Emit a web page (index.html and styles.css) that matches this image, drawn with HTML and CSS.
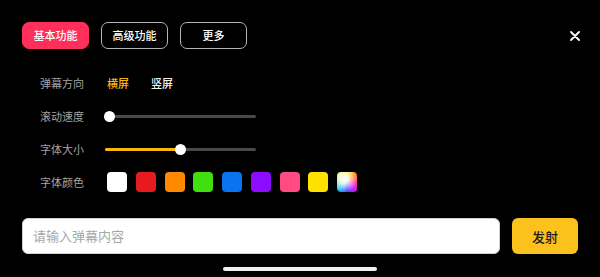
FILE: index.html
```html
<!DOCTYPE html>
<html lang="zh-CN">
<head>
<meta charset="utf-8">
<title>弹幕设置</title>
<link rel="stylesheet" href="styles.css">
</head>
<body>
<div class="page">
  <div class="top">
    <div class="tabs">
      <button class="tab active">基本功能</button>
      <button class="tab">高级功能</button>
      <button class="tab">更多</button>
    </div>
    <button class="close" aria-label="关闭">
      <svg width="10" height="10" viewBox="0 0 10 10"><path d="M1 1L9 9M9 1L1 9" stroke="#fff" stroke-width="1.8" stroke-linecap="round"/></svg>
    </button>
  </div>

  <div class="settings">
    <div class="row">
      <span class="label">弹幕方向</span>
      <div class="options">
        <span class="opt selected">横屏</span>
        <span class="opt">竖屏</span>
      </div>
    </div>
    <div class="row">
      <span class="label">滚动速度</span>
      <div class="slider" style="--v: 0">
        <div class="fill"></div>
        <div class="thumb"></div>
      </div>
    </div>
    <div class="row">
      <span class="label">字体大小</span>
      <div class="slider" style="--v: 0.5">
        <div class="fill"></div>
        <div class="thumb"></div>
      </div>
    </div>
    <div class="row">
      <span class="label">字体颜色</span>
      <div class="swatches">
        <span class="sw c-white"></span>
        <span class="sw c-red"></span>
        <span class="sw c-orange"></span>
        <span class="sw c-green"></span>
        <span class="sw c-blue"></span>
        <span class="sw c-purple"></span>
        <span class="sw c-pink"></span>
        <span class="sw c-yellow"></span>
        <span class="sw c-rainbow"></span>
      </div>
    </div>
  </div>

  <div class="compose">
    <div class="input">请输入弹幕内容</div>
    <button class="send">发射</button>
  </div>

  <div class="home"></div>
</div>
</body>
</html>
```

FILE: styles.css
```css
* { box-sizing: border-box; }
html, body {
  margin: 0;
  padding: 0;
  background: #000;
  width: 600px;
  height: 277px;
  overflow: hidden;
  font-family: "Noto Sans CJK SC", "Noto Sans", sans-serif;
}
.page {
  padding: 22px 22px 0 22px;
}
.top {
  display: flex;
  justify-content: space-between;
  align-items: center;
  height: 27px;
}
.tabs {
  display: flex;
  gap: 12px;
}
.tab {
  width: 67px;
  height: 27px;
  border: 1px solid #b5b5b5;
  border-radius: 7px;
  background: transparent;
  color: #fff;
  font-family: inherit;
  font-size: 11px;
  font-weight: 500;
  padding: 0;
  line-height: 25px;
}
.tab.active {
  background: #fe2f5a;
  border-color: #fe2f5a;
}
.close {
  background: none;
  border: 0;
  padding: 0;
  width: 10px;
  height: 10px;
  margin-right: -2px;
  display: flex;
}
.settings {
  margin-top: 17px;
  padding-left: 18px;
}
.row {
  display: flex;
  align-items: center;
  height: 33px;
}
.label {
  width: 65px;
  flex: none;
  color: #a3a3a3;
  font-size: 11px;
}
.options {
  display: flex;
  gap: 22px;
  margin-left: 2px;
}
.opt {
  color: #f2f2f2;
  font-size: 11px;
  font-weight: 500;
}
.opt.selected {
  color: #f7b70d;
}
.slider {
  position: relative;
  width: 151px;
  height: 3px;
  border-radius: 2px;
  background: #4a4a4a;
  margin-top: 1px;
}
.fill {
  height: 3px;
  border-radius: 2px;
  background: #f7b70d;
  width: calc(var(--v) * 142px + 4px);
}
.thumb {
  position: absolute;
  top: -4px;
  left: calc(var(--v) * 142px - 1px);
  width: 11px;
  height: 11px;
  border-radius: 50%;
  background: #fff;
}
.swatches {
  display: flex;
  gap: 8.75px;
  margin-left: 2px;
}
.sw {
  width: 20px;
  height: 20px;
  border-radius: 4px;
  display: block;
}
.c-white { background: #ffffff; }
.c-red { background: #e51b1d; }
.c-orange { background: #ff8a00; }
.c-green { background: #40e010; }
.c-blue { background: #0a74ee; }
.c-purple { background: #8d0cff; }
.c-pink { background: #ff4b82; }
.c-yellow { background: #ffe100; }
.c-rainbow {
  background:
    radial-gradient(circle at 35% 35%, rgba(255,255,255,1) 0%, rgba(255,255,255,0.85) 25%, rgba(255,255,255,0) 75%),
    conic-gradient(from 0deg at 50% 50%, #ffe000, #ff8000, #ff2d8a, #d020ff, #3a3aff, #00b0ff, #30e070, #c8f000, #ffe000);
}
.compose {
  display: flex;
  gap: 12px;
  margin-top: 20px;
  height: 36px;
}
.input {
  flex: 1;
  background: #fff;
  border-radius: 6px;
  border: 1px solid #d0d0d0;
  color: #a6a6a6;
  font-size: 13px;
  line-height: 34px;
  padding-left: 10px;
}
.send {
  width: 66px;
  height: 36px;
  border: 0;
  border-radius: 6px;
  background: #fcc11c;
  color: #1c1c1c;
  font-family: inherit;
  font-size: 13px;
  font-weight: 500;
  padding: 0;
}
.home {
  width: 154px;
  height: 4px;
  border-radius: 2px;
  background: #f0f0f0;
  margin: 13px auto 0;
}
```
